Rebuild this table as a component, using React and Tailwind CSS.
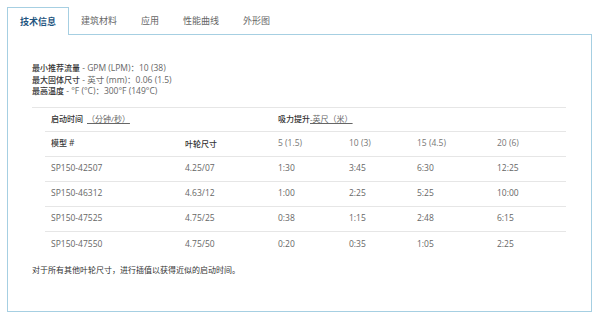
const TABS = ["技术信息", "建筑材料", "应用", "性能曲线", "外形图"]

const SPECS = [
  { label: "最小推荐流量", value: " - GPM (LPM)：10 (38)" },
  { label: "最大固体尺寸", value: " - 英寸 (mm)：0.06 (1.5)" },
  { label: "最高温度", value: " - °F (°C)：300°F (149°C)" },
]

const HEADS = ["5 (1.5)", "10 (3)", "15 (4.5)", "20 (6)"]

const ROWS = [
  ["SP150-42507", "4.25/07", "1:30", "3:45", "6:30", "12:25"],
  ["SP150-46312", "4.63/12", "1:00", "2:25", "5:25", "10:00"],
  ["SP150-47525", "4.75/25", "0:38", "1:15", "2:48", "6:15"],
  ["SP150-47550", "4.75/50", "0:20", "0:35", "1:05", "2:25"],
]

const grid = "grid grid-cols-[134px_93px_71px_68px_80px_75px] items-center"

export default function App() {
  return (
    <div
      className="w-[600px] h-[317px] bg-white pt-[7px] pl-[7px] text-[8px] text-[#555]"
      style={{ fontFamily: '"Open Sans", "Noto Sans CJK SC", sans-serif' }}
    >
      {/* Tabs */}
      <div className="flex h-[27px] text-[9px]">
        {TABS.map((t, i) => (
          <div
            key={t}
            className={`px-3 flex items-center ${
              i === 0
                ? "border border-b-0 border-[#a6cfe2] bg-white text-[#1f5580] font-semibold relative z-10 -mb-px"
                : "text-[#666]"
            }`}
          >
            {t}
          </div>
        ))}
      </div>

      {/* Panel */}
      <div className="w-[585px] h-[278px] border border-[#a6cfe2] pl-[24px] pt-[27px]">
        <div className="leading-[11.5px]">
          {SPECS.map(s => (
            <div key={s.label}>
              <span className="text-[#333] font-medium">{s.label}</span>
              <span className="text-[#666] text-[8.5px]">{s.value}</span>
            </div>
          ))}
        </div>

        <div className="mt-[10px] w-[534px] border-t border-[#e6e6e6]">
          <div className="ml-[13px]">
            <div className={`${grid} h-[24px] border-b border-[#e6e6e6]`}>
              <div className="col-span-2 pl-[6px]">
                <span className="text-[#333] font-medium">启动时间</span>
                <span className="text-[#666] underline ml-1">（分钟/秒）</span>
              </div>
              <div className="col-span-4 pl-[6px]">
                <span className="text-[#333] font-medium">吸力提升</span>
                <span className="text-[#666] underline">-英尺（米）</span>
              </div>
            </div>
            <div className={`${grid} h-[25px] border-b border-[#e6e6e6]`}>
              <div className="pl-[6px] text-[#333] font-medium">模型 <span className="text-[8.5px]">#</span></div>
              <div className="pl-[6px] text-[#333] font-medium">叶轮尺寸</div>
              {HEADS.map(h => (
                <div key={h} className="pl-[6px] text-[#777] text-[8.5px]">{h}</div>
              ))}
            </div>
            {ROWS.map((r, i) => (
              <div
                key={r[0]}
                className={`${grid} h-[25px] ${i < ROWS.length - 1 ? "border-b border-[#e6e6e6]" : ""}`}
              >
                {r.map((c, j) => (
                  <div key={j} className="pl-[6px] text-[#666] text-[8.5px]">{c}</div>
                ))}
              </div>
            ))}
          </div>
        </div>

        <p className="mt-[7px] text-[#333]">对于所有其他叶轮尺寸，进行插值以获得近似的启动时间。</p>
      </div>
    </div>
  )
}
